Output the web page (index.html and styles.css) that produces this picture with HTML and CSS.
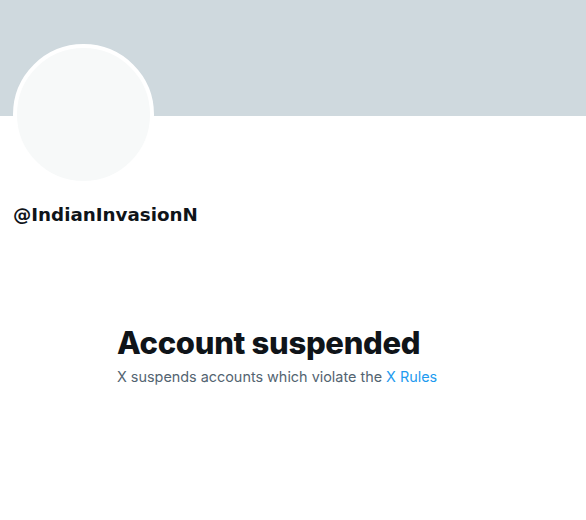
FILE: index.html
```html
<!DOCTYPE html>
<html>
<head>
<meta charset="utf-8">
<link rel="stylesheet" href="styles.css">
</head>
<body>
<div class="page">
  <div class="banner"></div>
  <div class="profile">
    <div class="avatar"></div>
    <div class="handle">@IndianInvasionN</div>
  </div>
  <div class="notice">
    <h1 class="title">Account suspended</h1>
    <p class="desc">X suspends accounts which violate the <a class="link" href="#">X Rules</a></p>
  </div>
</div>
</body>
</html>
```
FILE: styles.css
```css
html, body {
  margin: 0;
  padding: 0;
  background: #ffffff;
}
.page {
  width: 586px;
  height: 520px;
  overflow: hidden;
  font-family: "Inter", "Liberation Sans", sans-serif;
}
.banner {
  height: 116px;
  background: #cfd9de;
}
.profile {
  padding-left: 13px;
}
.avatar {
  width: 133px;
  height: 133px;
  margin-top: -72px;
  border-radius: 50%;
  border: 4px solid #ffffff;
  background: #f7f9f9;
}
.handle {
  margin-top: 18px;
  font-family: "DejaVu Sans", sans-serif;
  font-size: 18.3px;
  font-weight: 700;
  color: #0f1419;
  line-height: 24px;
}
.notice {
  padding-left: 117px;
  margin-top: 98px;
}
.title {
  margin: 0;
  font-size: 31px;
  font-weight: 800;
  color: #0f1419;
  line-height: 36px;
  letter-spacing: -0.3px;
}
.desc {
  margin: 6px 0 0;
  font-size: 14.4px;
  color: #536471;
  line-height: 20px;
}
.link {
  color: #1d9bf0;
  text-decoration: none;
}
```
